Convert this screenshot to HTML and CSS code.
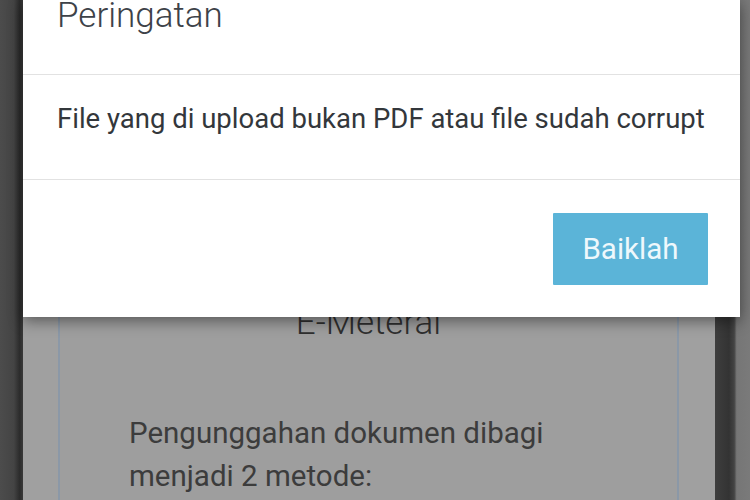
FILE: index.html
```html
<!DOCTYPE html>
<html lang="id">
<head>
<meta charset="utf-8">
<title>Peringatan</title>
<link rel="stylesheet" href="styles.css">
</head>
<body>
<div class="screen">
  <div class="edge-left"></div>
  <div class="page">
    <div class="card">
      <h2 class="card-title">E-Meteral</h2>
      <p class="card-text">Pengunggahan dokumen dibagi menjadi 2 metode:</p>
    </div>
  </div>
  <div class="edge-right"></div>

  <div class="modal">
    <div class="modal-header">
      <h1 class="modal-title">Peringatan</h1>
    </div>
    <div class="modal-body">File yang di upload bukan PDF atau file sudah corrupt</div>
    <div class="modal-footer">
      <button class="btn-ok">Baiklah</button>
    </div>
  </div>
</div>
</body>
</html>
```

FILE: styles.css
```css
html, body {
  margin: 0;
  padding: 0;
  width: 750px;
  height: 500px;
  overflow: hidden;
  font-family: Roboto, "Noto Sans", "Liberation Sans", sans-serif;
}

.screen {
  position: relative;
  display: flex;
  width: 750px;
  height: 500px;
  background: #9f9f9f;
}

.edge-left {
  width: 23px;
  flex: none;
  background: linear-gradient(to right, #4c4c4c 0, #444 60%, #2c2c2c 85%, #3a3a3a 100%);
}

.page {
  flex: 1;
  display: flex;
  padding: 0 36px 0 35px;
  background: #a0a0a0;
}

.card {
  flex: 1;
  border-left: 2px solid #8b98a7;
  border-right: 2px solid #8b98a7;
  background: #9e9e9e;
  padding-top: 303px;
}

.card-title {
  margin: 0;
  font-size: 35px;
  line-height: 40px;
  font-weight: 300;
  text-align: center;
  color: #2f2f2f;
}

.card-text {
  width: 470px;
  margin: 69px 0 0 69px;
  font-size: 29.5px;
  line-height: 43px;
  color: #3c3c3c;
}

.edge-right {
  width: 35px;
  flex: none;
  background: linear-gradient(to right, #3e3e3e 0, #333 40%, #444 55%, #767676 62%, #7a7a7a 100%);
}

.modal {
  position: absolute;
  left: 23px;
  top: 0;
  width: 717px;
  background: #fff;
  box-shadow: 0 4px 14px rgba(0, 0, 0, 0.45);
}

.modal-header {
  box-sizing: border-box;
  height: 75px;
  padding: 0 34px;
  border-bottom: 1px solid #e2e2e2;
}

.modal-title {
  margin: 0;
  font-size: 35px;
  line-height: 32px;
  font-weight: 300;
  color: #3d4248;
}

.modal-body {
  padding: 24px 34px 40px;
  font-size: 27.5px;
  line-height: 40px;
  color: #33373b;
  border-bottom: 1px solid #e2e2e2;
}

.modal-footer {
  display: flex;
  justify-content: flex-end;
  padding: 33px 32px 32px;
}

.btn-ok {
  width: 155px;
  height: 72px;
  border: none;
  border-radius: 1px;
  background: #5bb4d8;
  color: #eef8fc;
  font-family: Roboto, "Noto Sans", "Liberation Sans", sans-serif;
  font-size: 29.5px;
  padding: 0;
}
```
